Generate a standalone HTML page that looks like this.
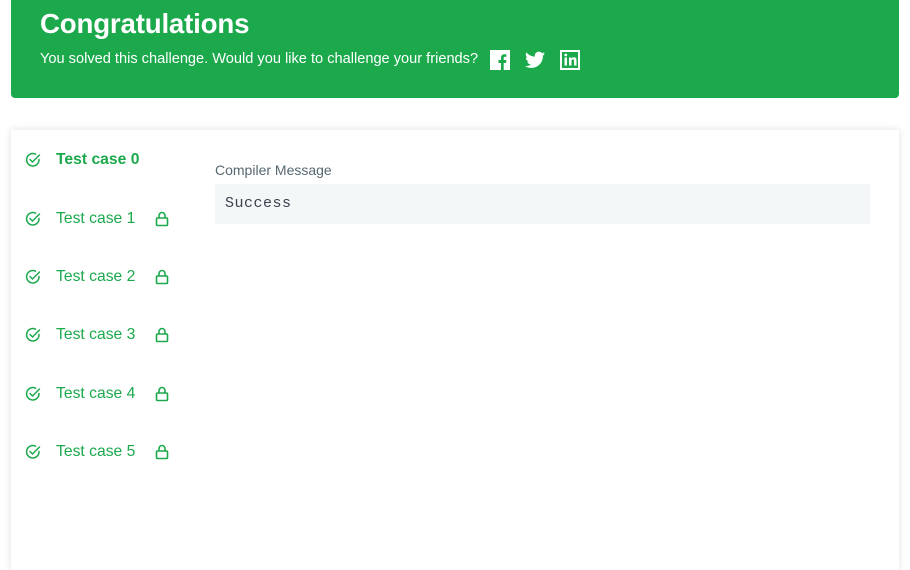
<!DOCTYPE html>
<html><head><meta charset="utf-8"><style>
body{margin:0;width:910px;height:558px;background:#fff;font-family:"Liberation Sans",sans-serif;overflow:hidden;position:relative}
.banner{position:absolute;left:11px;top:0;width:888px;height:98px;background:#1ba94c;border-radius:0 0 4px 4px;color:#fff}
.banner h1{position:absolute;left:29px;top:8px;margin:0;font-size:27.7px;font-weight:bold;letter-spacing:-0.2px}
.banner p{position:absolute;left:29px;top:51px;margin:0;font-size:14.6px;white-space:nowrap}
.ic{position:absolute;top:50px}
.card{position:absolute;left:11px;top:130px;width:888px;height:440px;background:#fff;box-shadow:0 0 8px rgba(0,0,0,0.12)}
.tc{position:absolute;left:14px;color:#1ba94c;font-size:15.7px;height:20px;line-height:20px}
.tc svg{position:absolute;left:0;top:3px}
.tc span{position:absolute;left:31px;top:1px;white-space:nowrap}
.tc .lock{left:130px;top:3px}
.lbl{position:absolute;left:204px;top:32px;font-size:14px;color:#576871}
.box{position:absolute;left:204px;top:54px;width:655px;height:40px;background:#f3f7f7;font-family:"Liberation Mono",monospace;font-size:15px;color:#39424e;line-height:40px;text-indent:10px;letter-spacing:0.5px}
</style></head><body>
<div class="banner">
<h1>Congratulations</h1>
<p>You solved this challenge. Would you like to challenge your friends?</p>
<svg class="ic" style="left:479px" width="20" height="20" viewBox="0 0 20 20"><rect width="20" height="20" fill="#fff"/><path d="M11 20v-7h-2.5v-3H11V7.8C11 5.5 12.4 4.3 14.4 4.3c1 0 1.8.1 2 .1v2.4h-1.4c-1.1 0-1.3.5-1.3 1.3V10h2.7l-.4 3h-2.3v7z" fill="#1ba94c"/></svg>
<svg class="ic" style="left:514px;top:51px" width="20" height="18" viewBox="0 0 24 20"><path d="M24 2.4c-.9.4-1.8.6-2.8.8 1-.6 1.8-1.6 2.2-2.7-1 .6-2 1-3.1 1.2C19.3.7 18 0 16.6 0c-2.7 0-4.9 2.2-4.9 4.9 0 .4 0 .8.1 1.1C7.7 5.8 4.1 3.9 1.7.9c-.4.7-.7 1.6-.7 2.5 0 1.7.9 3.2 2.2 4.1-.8 0-1.6-.2-2.2-.6v.1c0 2.4 1.7 4.4 3.9 4.8-.4.1-.8.2-1.3.2-.3 0-.6 0-.9-.1.6 2 2.4 3.4 4.6 3.4-1.7 1.3-3.8 2.1-6.1 2.1-.4 0-.8 0-1.2-.1 2.2 1.4 4.8 2.2 7.5 2.2 9.1 0 14-7.5 14-14v-.6c1-.7 1.8-1.6 2.5-2.5z" fill="#fff"/></svg>
<svg class="ic" style="left:549px" width="20" height="20" viewBox="0 0 20 20"><rect width="20" height="20" fill="#fff"/><rect x="2" y="2" width="16" height="16" fill="#1ba94c"/><rect x="4.5" y="7.5" width="2.5" height="8" fill="#fff"/><circle cx="5.75" cy="5" r="1.4" fill="#fff"/><path d="M9 7.5h2.4v1.1c.4-.7 1.3-1.3 2.5-1.3 2 0 2.6 1.2 2.6 3.2v5h-2.5v-4.5c0-1-.3-1.6-1.2-1.6-1 0-1.3.7-1.3 1.7v4.4H9z" fill="#fff"/></svg>
</div>
<div class="card">
<div class="lbl">Compiler Message</div>
<div class="box">Success</div>
</div>
<div id="list"></div>
<script>
var h='';var ys=[149,208,266,324,383,441];
var chk='<svg width="16" height="16" viewBox="0 0 16 16" fill="none" stroke="#1ba94c" stroke-width="1.5" stroke-linecap="round"><path d="M14 7.5A6.2 6.2 0 1 1 10.5 2.2"/><path d="M5 7.5l2.5 2.5L14.5 3"/></svg>';
var lock='<svg class="lock" width="14" height="16" viewBox="0 0 14 16" fill="none" stroke="#1ba94c" stroke-width="1.6"><rect x="1.5" y="7" width="11" height="7.5" rx="1"/><path d="M4 7V4.5a3 3 0 0 1 6 0V7"/></svg>';
for(var i=0;i<6;i++){h+='<div class="tc" style="top:'+ys[i]+'px;left:25px">'+chk+'<span style="'+(i==0?'font-weight:bold':'')+'">Test case '+i+'</span>'+(i>0?lock:'')+'</div>';}
document.getElementById('list').innerHTML=h;
</script>
</body></html>
